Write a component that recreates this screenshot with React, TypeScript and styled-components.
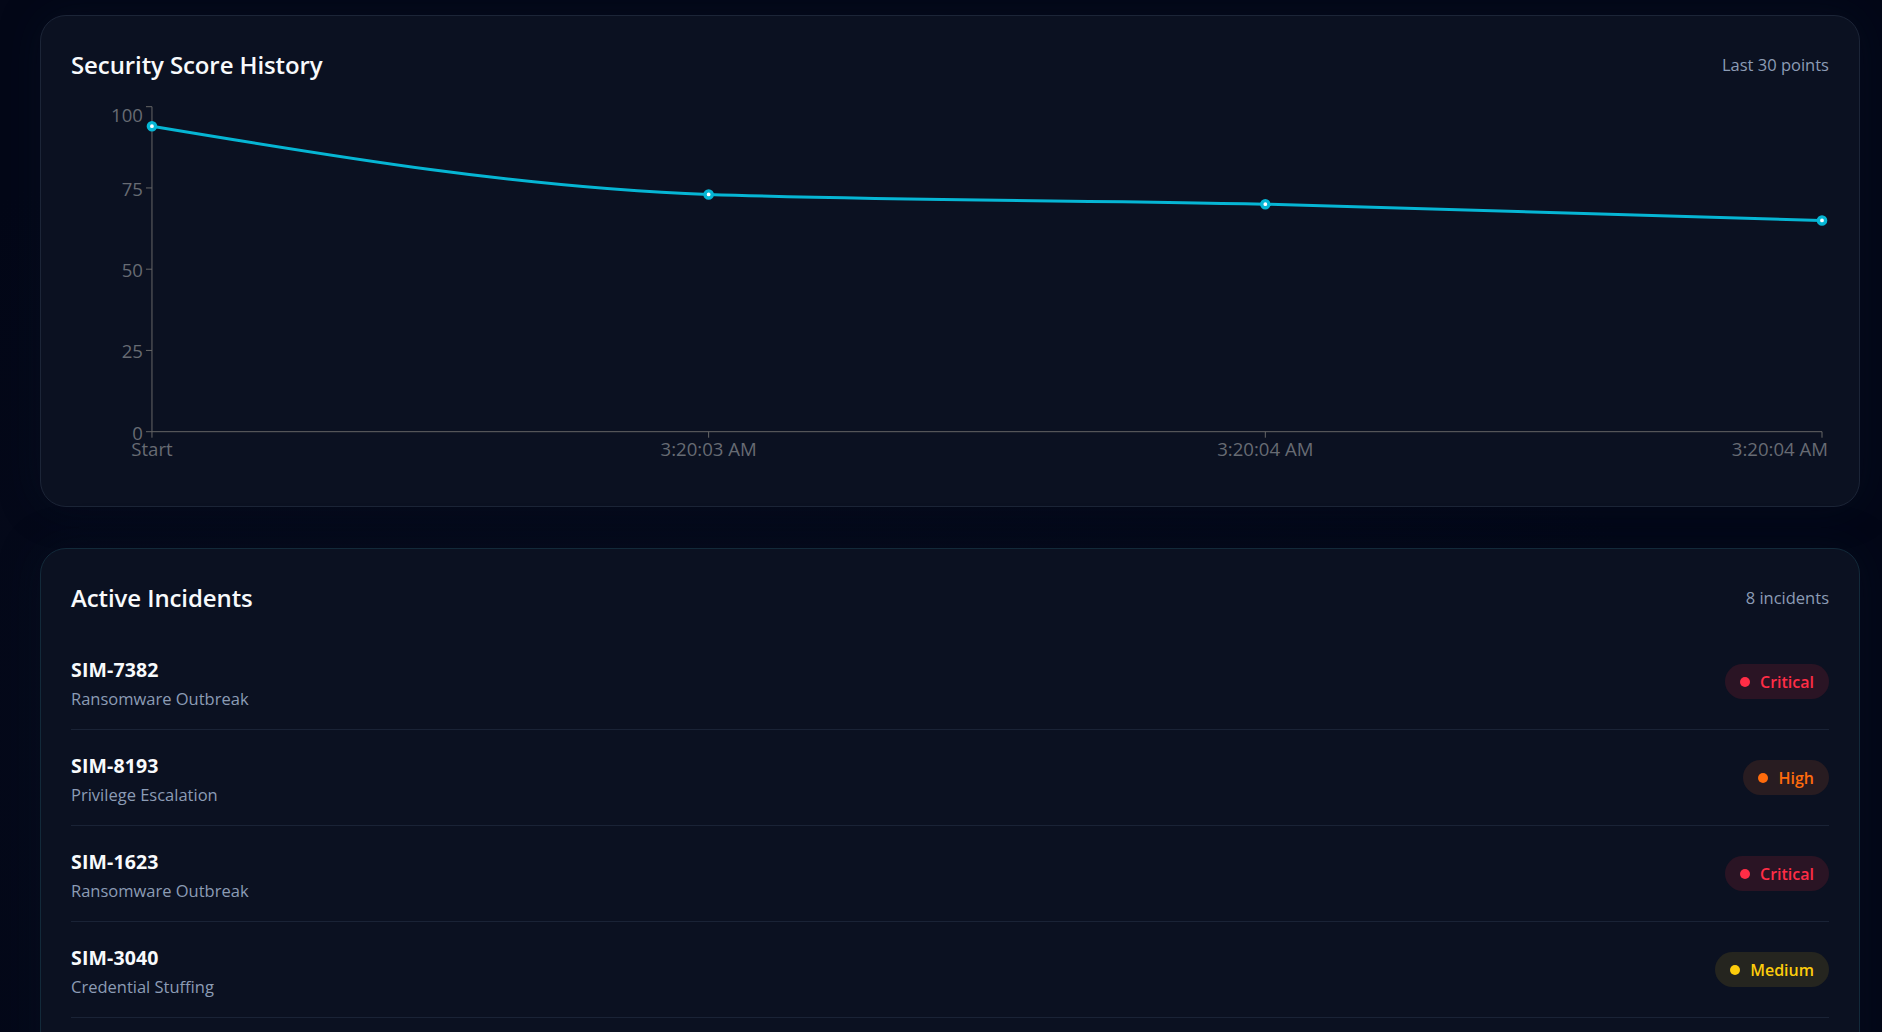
import React from "react";
import styled, { createGlobalStyle } from "styled-components";

const GlobalStyle = createGlobalStyle`
  html, body {
    margin: 0;
    padding: 0;
    background: #030717;
    font-family: "Open Sans", "Noto Sans", sans-serif;
    scrollbar-width: none;
  }
  body::-webkit-scrollbar { display: none; }
  * { box-sizing: border-box; }
`;

const Page = styled.div`
  display: flex;
  flex-direction: column;
  gap: 41px;
  padding: 15px 22px 40px 40px;
  min-height: 100vh;
  background: radial-gradient(ellipse at 30% 50%, #060b1c 0%, #030717 60%);
`;

const Card = styled.section<{ $accent?: boolean }>`
  background: #0b1121;
  border: 1px solid ${(p) => (p.$accent ? "#132a3a" : "#1c2537")};
  border-radius: 26px;
  padding: 30px;
  box-shadow: 0 0 40px rgba(8, 20, 40, 0.35);
`;

const CardHeader = styled.header<{ $gap: number }>`
  display: flex;
  align-items: center;
  justify-content: space-between;
  height: 36px;
  margin-bottom: ${(p) => p.$gap}px;
`;

const CardTitle = styled.h2`
  margin: 0;
  font-size: 24px;
  font-weight: 600;
  color: #f8fafc;
  letter-spacing: -0.1px;
`;

const Meta = styled.span`
  font-size: 16.5px;
  color: #8c9cb5;
`;

const ChartSvg = styled.svg`
  display: block;
  width: 100%;
  height: 382px;
  overflow: visible;
`;

const TickText = styled.text`
  font-family: "Open Sans", "Noto Sans", sans-serif;
  font-size: 18.6px;
  fill: #676b73;
`;

const List = styled.ul`
  list-style: none;
  margin: 0;
  padding: 0;
`;

const Row = styled.li`
  display: flex;
  align-items: center;
  justify-content: space-between;
  padding: 23px 0 17px;
  border-bottom: 1px solid #1a2336;
`;

const RowText = styled.div`
  display: flex;
  flex-direction: column;
`;

const IncidentId = styled.span`
  font-size: 19.5px;
  line-height: 26px;
  font-weight: 700;
  color: #f8fafc;
  letter-spacing: 0.15px;
`;

const IncidentName = styled.span`
  margin-top: 3px;
  font-size: 16.5px;
  line-height: 26px;
  color: #8c9cb5;
`;

type Severity = "Critical" | "High" | "Medium" | "Low";

const severityColors: Record<Severity, { fg: string; bg: string }> = {
  Critical: { fg: "#ff2d46", bg: "#2a1424" },
  High: { fg: "#ff6b0c", bg: "#281c21" },
  Medium: { fg: "#fccc0c", bg: "#25251f" },
  Low: { fg: "#22c55e", bg: "#102322" },
};

const Badge = styled.span<{ $sev: Severity }>`
  display: inline-flex;
  align-items: center;
  gap: 10px;
  height: 35px;
  margin-bottom: 6px;
  padding: 0 15px;
  border-radius: 999px;
  background: ${(p) => severityColors[p.$sev].bg};
  color: ${(p) => severityColors[p.$sev].fg};
  font-size: 16px;
  font-weight: 600;
`;

const Dot = styled.span<{ $sev: Severity }>`
  width: 10px;
  height: 10px;
  border-radius: 50%;
  background: ${(p) => severityColors[p.$sev].fg};
`;

const W = 1759;
const AXIS_X = 81;
const END_X = 1752;
const PLOT_TOP = 12.7;
const PLOT_BOTTOM = 337.7;

const history = [
  { label: "Start", value: 94 },
  { label: "3:20:03 AM", value: 73 },
  { label: "3:20:04 AM", value: 70 },
  { label: "3:20:04 AM", value: 65 },
];

const yFor = (v: number) => PLOT_BOTTOM - (v / 100) * (PLOT_BOTTOM - PLOT_TOP);
const xFor = (i: number) => AXIS_X + (i * (END_X - AXIS_X)) / (history.length - 1);

function monotonePath(pts: { x: number; y: number }[]): string {
  const n = pts.length;
  const sign = (v: number) => (v < 0 ? -1 : 1);
  const m: number[] = new Array(n).fill(0);
  for (let i = 1; i < n - 1; i++) {
    const h0 = pts[i].x - pts[i - 1].x;
    const h1 = pts[i + 1].x - pts[i].x;
    const s0 = (pts[i].y - pts[i - 1].y) / h0;
    const s1 = (pts[i + 1].y - pts[i].y) / h1;
    const p = (s0 * h1 + s1 * h0) / (h0 + h1);
    m[i] = (sign(s0) + sign(s1)) * Math.min(Math.abs(s0), Math.abs(s1), 0.5 * Math.abs(p)) || 0;
  }
  const h0 = pts[1].x - pts[0].x;
  m[0] = (3 * (pts[1].y - pts[0].y) / h0 - m[1]) / 2;
  const hl = pts[n - 1].x - pts[n - 2].x;
  m[n - 1] = (3 * (pts[n - 1].y - pts[n - 2].y) / hl - m[n - 2]) / 2;
  let d = `M${pts[0].x},${pts[0].y}`;
  for (let i = 0; i < n - 1; i++) {
    const a = pts[i];
    const b = pts[i + 1];
    const dx = (b.x - a.x) / 3;
    d += `C${a.x + dx},${a.y + dx * m[i]},${b.x - dx},${b.y - dx * m[i + 1]},${b.x},${b.y}`;
  }
  return d;
}

const ScoreChart: React.FC = () => {
  const pts = history.map((h, i) => ({ x: xFor(i), y: yFor(h.value) }));
  const ticks = [0, 25, 50, 75, 100];
  return (
    <ChartSvg viewBox={`0 0 ${W} 382`} preserveAspectRatio="none">
      <line x1={AXIS_X} y1={PLOT_TOP} x2={AXIS_X} y2={PLOT_BOTTOM} stroke="#666" strokeWidth={1} />
      <line x1={AXIS_X} y1={PLOT_BOTTOM} x2={END_X} y2={PLOT_BOTTOM} stroke="#666" strokeWidth={1} />
      {ticks.map((t) => (
        <g key={t}>
          <line x1={AXIS_X - 6} y1={yFor(t)} x2={AXIS_X} y2={yFor(t)} stroke="#666" />
          <TickText x={AXIS_X - 9} y={yFor(t) + (t === 100 ? 15.6 : 8)} textAnchor="end">
            {t}
          </TickText>
        </g>
      ))}
      {history.map((h, i) => (
        <g key={i}>
          <line x1={xFor(i)} y1={PLOT_BOTTOM} x2={xFor(i)} y2={PLOT_BOTTOM + 6} stroke="#666" />
          <TickText
            x={i === history.length - 1 ? W - 1 : xFor(i)}
            y={PLOT_BOTTOM + 24.5}
            textAnchor={i === history.length - 1 ? "end" : "middle"}
          >
            {h.label}
          </TickText>
        </g>
      ))}
      <path d={monotonePath(pts)} fill="none" stroke="#06b6d4" strokeWidth={3} />
      {pts.map((p, i) => (
        <circle key={i} cx={p.x} cy={p.y} r={3.6} fill="#ffffff" stroke="#06b6d4" strokeWidth={3.4} />
      ))}
    </ChartSvg>
  );
};

const incidents: { id: string; name: string; severity: Severity }[] = [
  { id: "SIM-7382", name: "Ransomware Outbreak", severity: "Critical" },
  { id: "SIM-8193", name: "Privilege Escalation", severity: "High" },
  { id: "SIM-1623", name: "Ransomware Outbreak", severity: "Critical" },
  { id: "SIM-3040", name: "Credential Stuffing", severity: "Medium" },
  { id: "SIM-5521", name: "Phishing Campaign", severity: "High" },
  { id: "SIM-2917", name: "Data Exfiltration", severity: "Critical" },
  { id: "SIM-4406", name: "Malware Beacon", severity: "Medium" },
  { id: "SIM-6658", name: "Suspicious Login", severity: "Low" },
];

export default function App() {
  return (
    <>
      <GlobalStyle />
      <Page>
        <Card>
          <CardHeader $gap={12}>
            <CardTitle>Security Score History</CardTitle>
            <Meta>Last 30 points</Meta>
          </CardHeader>
          <ScoreChart />
        </Card>
        <Card $accent>
          <CardHeader $gap={19}>
            <CardTitle>Active Incidents</CardTitle>
            <Meta>{incidents.length} incidents</Meta>
          </CardHeader>
          <List>
            {incidents.map((inc) => (
              <Row key={inc.id}>
                <RowText>
                  <IncidentId>{inc.id}</IncidentId>
                  <IncidentName>{inc.name}</IncidentName>
                </RowText>
                <Badge $sev={inc.severity}>
                  <Dot $sev={inc.severity} />
                  {inc.severity}
                </Badge>
              </Row>
            ))}
          </List>
        </Card>
      </Page>
    </>
  );
}
